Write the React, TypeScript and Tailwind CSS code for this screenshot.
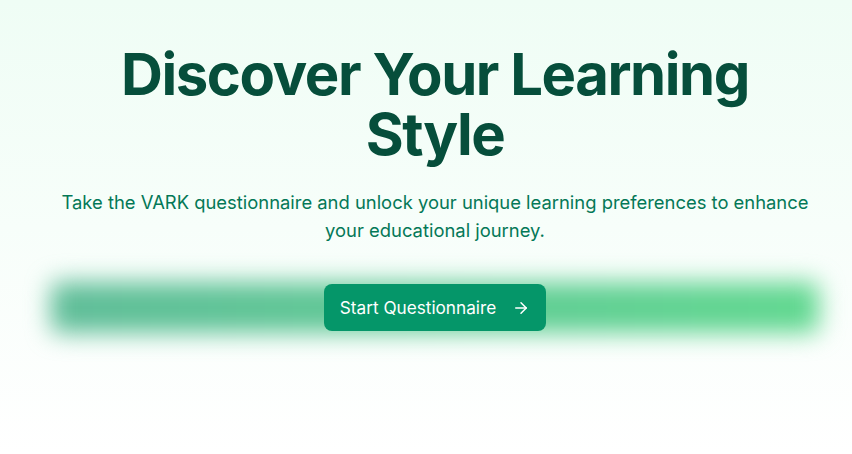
import { ArrowRight } from "lucide-react";

const App = () => {
  return (
    <div className="min-h-screen w-full bg-gradient-to-b from-[#effdf5] to-white font-['Inter',sans-serif]">
      <div className="flex flex-col items-center pl-[51px] pr-[33px] pt-[44px] text-center">
        <h1 className="text-[58px] leading-[60px] font-bold tracking-tight text-[#064e3b]">
          Discover Your Learning
          <br />
          Style
        </h1>
        <p className="mt-6 text-[18.4px] leading-7 text-[#047857]">
          Take the VARK questionnaire and unlock your unique learning preferences to enhance
          <br />
          your educational journey.
        </p>
        <div className="relative mt-10 flex w-full justify-center">
          <div className="absolute -inset-y-[2px] inset-x-0 rounded-lg bg-gradient-to-r from-[#5fbd98] to-[#61d890] blur-md" />
          <button className="relative flex h-[47px] items-center gap-4 rounded-lg bg-[#059669] px-4 text-[17.2px] leading-7 text-white">
            <span>Start Questionnaire</span>
            <ArrowRight className="h-[18px] w-[18px]" strokeWidth={2} />
          </button>
        </div>
      </div>
    </div>
  );
};

export default App;
